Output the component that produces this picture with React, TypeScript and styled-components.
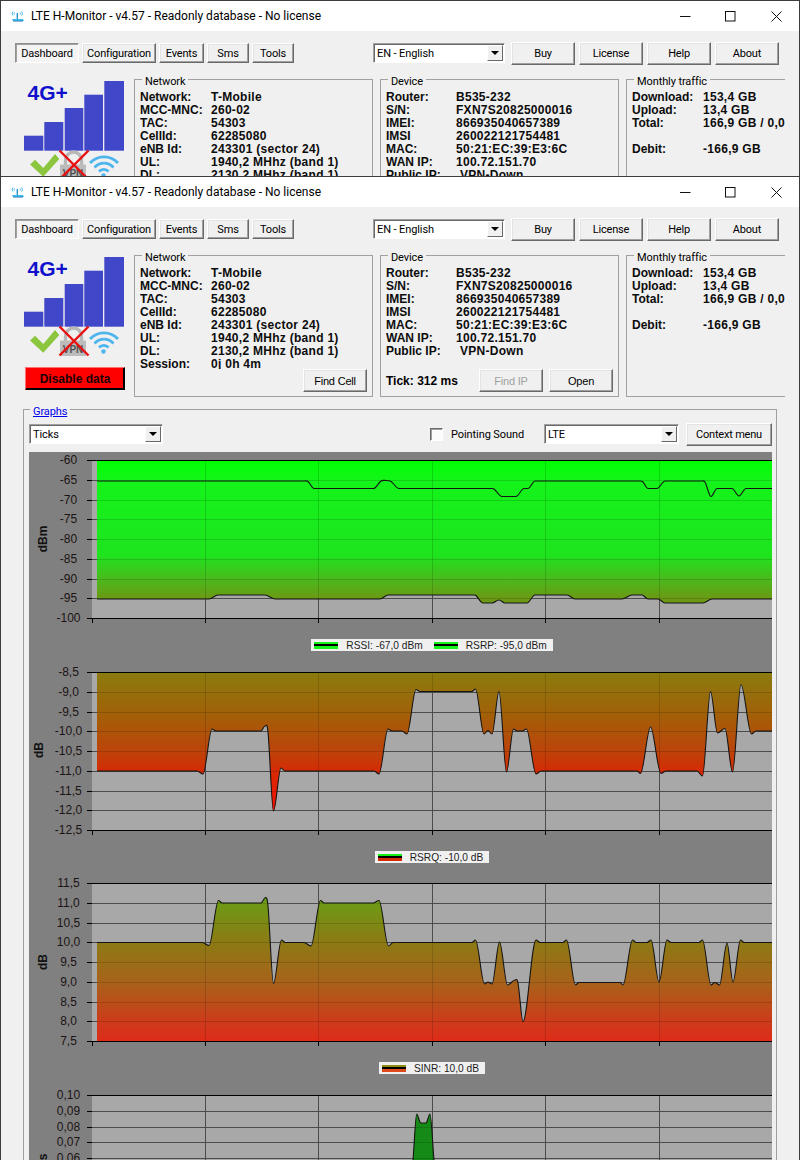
import React, { FC, ReactNode, useId } from "react";
import styled, { createGlobalStyle } from "styled-components";

const UI_FONT = `Roboto, "Liberation Sans", sans-serif`;
const DATA_FONT = `"Liberation Sans", Arial, sans-serif`;

const GlobalStyle = createGlobalStyle`
  html, body {
    margin: 0;
    padding: 0;
    width: 800px;
    height: 1160px;
    overflow: hidden;
    background: #f0f0f0;
  }
  * { box-sizing: border-box; }
`;

const Page = styled.div`
  display: flex;
  flex-direction: column;
  width: 800px;
  height: 1160px;
  overflow: hidden;
`;

const Window = styled.div<{ $height: number }>`
  flex: none;
  height: ${({ $height }) => $height}px;
  overflow: hidden;
  background: #f0f0f0;
  border: 1px solid #3c3c3c;
  border-bottom: none;
  font-family: ${UI_FONT};
  color: #000;
`;

const TitleBar = styled.div`
  display: flex;
  align-items: center;
  height: 30px;
  background: #fff;
  padding-left: 10px;
`;

const TitleText = styled.span`
  margin-left: 7px;
  font-size: 12px;
  white-space: nowrap;
  flex: 1;
`;

const TitleButton = styled.span`
  display: flex;
  align-items: center;
  justify-content: center;
  width: 45.5px;
  height: 30px;
`;

const Toolbar = styled.div`
  display: flex;
  align-items: flex-start;
  padding: 11px 0 14px 14px;
  height: 48px;
`;

const TabGroup = styled.div`
  display: flex;
  gap: 3px;
  margin-top: 1px;
`;

const Button = styled.div<{ $width: number; $height?: number; $disabled?: boolean }>`
  flex: none;
  display: flex;
  align-items: center;
  justify-content: center;
  width: ${({ $width }) => $width}px;
  height: ${({ $height }) => $height ?? 23}px;
  background: #f0f0f0;
  border: 1px solid;
  border-color: #fff #696969 #696969 #fff;
  box-shadow: inset -1px -1px 0 #a0a0a0, inset 1px 1px 0 #e3e3e3;
  font-size: 11px;
  letter-spacing: -0.2px;
  color: ${({ $disabled }) => ($disabled ? "#a0a0a0" : "#000")};
  white-space: nowrap;
`;

const PressedButton = styled(Button)`
  border-color: #8f8f8f #fff #fff #8f8f8f;
  box-shadow: inset 1px 1px 0 #a0a0a0;
  background: #f4f4f4;
`;

const Combo = styled.div<{ $width: number; $left?: number }>`
  flex: none;
  position: relative;
  display: flex;
  align-items: center;
  width: ${({ $width }) => $width}px;
  height: 20px;
  margin-left: ${({ $left }) => $left ?? 0}px;
  margin-top: 1px;
  background: #fff;
  padding-left: 3px;
  border: 1px solid;
  border-color: #a0a0a0 #fff #fff #a0a0a0;
  box-shadow: inset 1px 1px 0 #696969;
  font-size: 11px;
  letter-spacing: -0.1px;
  white-space: nowrap;
`;

const ComboArrow = styled.span`
  position: absolute;
  right: 1px;
  top: 1px;
  width: 16px;
  height: 16px;
  background: #f0f0f0;
  border: 1px solid;
  border-color: #fff #696969 #696969 #fff;
  &::after {
    content: "";
    position: absolute;
    left: 3px;
    top: 5px;
    border-style: solid;
    border-width: 4px 4px 0 4px;
    border-color: #000 transparent transparent transparent;
  }
`;

const RightButtons = styled.div`
  display: flex;
  gap: 4px;
  margin-left: 6px;
`;

const Sections = styled.div`
  display: flex;
  height: 142px;
`;

const LogoColumn = styled.div`
  flex: none;
  width: 133px;
  padding: 2px 0 0 23px;
`;

const DisableButton = styled.div`
  display: flex;
  align-items: center;
  justify-content: center;
  width: 100px;
  height: 23px;
  margin: 10px 0 0 1px;
  background: #ff0000;
  border: 1px solid;
  border-color: #ff7070 #000 #000 #ff7070;
  box-shadow: inset -1px -1px 0 #000;
  font-family: ${DATA_FONT};
  font-weight: bold;
  font-size: 12px;
  color: #1a0000;
`;

const GroupBox = styled.div<{ $width: number; $open?: boolean }>`
  flex: none;
  position: relative;
  display: flex;
  flex-direction: column;
  width: ${({ $width }) => $width}px;
  margin-right: 7px;
  padding: 11px 5px 4px;
  border: 1px solid #a0a0a0;
  ${({ $open }) => ($open ? "border-right: none; padding-right: 0;" : "")}
  font-family: ${DATA_FONT};
  font-size: 12px;
`;

const GroupTitle = styled.span`
  position: absolute;
  left: 7px;
  top: -5px;
  padding: 0 3px;
  background: #f0f0f0;
  font-family: ${UI_FONT};
  font-size: 11px;
  letter-spacing: -0.1px;
  line-height: 13px;
  white-space: nowrap;
`;

const GraphsTitle = styled(GroupTitle)`
  left: 6px;
  color: #0000ee;
  text-decoration: underline;
`;

const InfoList = styled.div`
  overflow: hidden;
`;

const InfoRow = styled.div<{ $labelWidth: number }>`
  display: grid;
  grid-template-columns: ${({ $labelWidth }) => $labelWidth}px 1fr;
  height: 13px;
  line-height: 13px;
  font-weight: bold;
  color: #0c0c0c;
  white-space: nowrap;
`;

const InfoValue = styled.span<{ $indent?: boolean }>`
  padding-left: ${({ $indent }) => ($indent ? 4 : 0)}px;
  letter-spacing: 0.28px;
`;

const BoxFooter = styled.div`
  display: flex;
  align-items: center;
  justify-content: flex-end;
  gap: 6px;
  margin-top: auto;
`;

const TickText = styled.span`
  margin-right: auto;
  font-weight: bold;
`;

const GraphsBox = styled.div`
  position: relative;
  width: 754px;
  height: 760px;
  margin: 12px 0 0 22px;
  padding: 13px 4px 0 5px;
  border: 1px solid #a0a0a0;
  border-bottom: none;
`;

const GraphsControls = styled.div`
  display: flex;
  align-items: flex-start;
  height: 29px;
`;

const SoundOption = styled.label`
  display: flex;
  align-items: center;
  gap: 8px;
  margin: 5px 20px 0 auto;
  font-size: 11px;
  letter-spacing: -0.1px;
  white-space: nowrap;
`;

const CheckBox = styled.span`
  width: 13px;
  height: 13px;
  background: #fbfbfb;
  border: 1px solid;
  border-color: #696969 #fff #fff #696969;
  box-shadow: inset 1px 1px 0 #a0a0a0;
`;

const ContextButton = styled(Button)`
  margin-left: 7px;
`;

const ChartPanel = styled.div`
  width: 743px;
  background: #808080;
`;

const ChartPane = styled.div<{ $height: number }>`
  height: ${({ $height }) => $height}px;
`;

const ChartSvg = styled.svg`
  display: block;
`;

const LegendRow = styled.div`
  display: flex;
  align-items: center;
  justify-content: center;
  height: 30px;
  padding-left: 63px;
`;

const LegendBox = styled.div`
  display: flex;
  align-items: center;
  gap: 11px;
  height: 12px;
  padding: 0 6px 0 3px;
  background: #f0f0f0;
  font-family: ${DATA_FONT};
  font-size: 10.2px;
  color: #1c1c1c;
  white-space: nowrap;
`;

const LegendEntry = styled.span`
  display: flex;
  align-items: center;
  gap: 8px;
`;

const LegendKey = styled.span<{ $fill: string }>`
  position: relative;
  width: 24px;
  height: 7px;
  background: ${({ $fill }) => $fill};
  &::after {
    content: "";
    position: absolute;
    left: 0;
    right: 0;
    top: 2.5px;
    height: 2px;
    background: #000;
  }
`;

type Point = [number, number];

const CHART_LEFT = 29;
const CHART_WIDTH = 743;
const PLOT_LEFT = 92;
const PLOT_RIGHT = 772;
const GRID_X = [205.5, 318.5, 432.5, 545.5, 659.5];

// hermite spline through the points, flat at each peak and dip so it stays on the read values
const splinePath = (points: Point[]) => {
  const slope = (i: number) => {
    const a = points[Math.max(i - 1, 0)];
    const p = points[i];
    const b = points[Math.min(i + 1, points.length - 1)];
    if ((p[1] - a[1]) * (b[1] - p[1]) <= 0) return 0;
    return (b[1] - a[1]) / (b[0] - a[0]);
  };
  let d = `M${points[0][0]} ${points[0][1]}`;
  for (let i = 0; i < points.length - 1; i++) {
    const [x0, y0] = points[i];
    const [x1, y1] = points[i + 1];
    const dx = (x1 - x0) / 3;
    d += ` C${x0 + dx} ${y0 + slope(i) * dx} ${x1 - dx} ${y1 - slope(i + 1) * dx} ${x1} ${y1}`;
  }
  return d;
};

type ChartConfig = {
  top: number;
  paneHeight: number;
  labels: string[];
  unit: string;
  unitX: number;
  unitY: number;
  series: Point[][];
  fillEdge: "top" | "bottom";
  fillPoints: Point[];
  stops: [number, string][];
};

const PLOT_HEIGHT = 158;

const Chart: FC<{ config: ChartConfig; children: ReactNode }> = ({ config, children }) => {
  const { top, paneHeight, labels, unit, unitX, unitY, series, fillEdge, fillPoints, stops } = config;
  const id = useId();
  const step = PLOT_HEIGHT / (labels.length - 1);
  const bottom = top + PLOT_HEIGHT;
  const rows = labels.map((_, i) => Math.round(top + i * step) + 0.5);
  const edge = fillEdge === "top" ? top : bottom;
  const first = fillPoints[0];
  const last = fillPoints[fillPoints.length - 1];
  const area = `${splinePath(fillPoints)} L${last[0]} ${edge} L${first[0]} ${edge} Z`;

  const grid = (
    <>
      {rows.slice(1, -1).map((y) => (
        <line key={y} x1={PLOT_LEFT} x2={PLOT_RIGHT} y1={y} y2={y} />
      ))}
      {GRID_X.map((x) => (
        <line key={x} x1={x} x2={x} y1={top} y2={bottom} />
      ))}
    </>
  );

  return (
    <ChartPane $height={paneHeight}>
      <ChartSvg
        width={CHART_WIDTH}
        height={178}
        viewBox={`${CHART_LEFT} ${top - 8} ${CHART_WIDTH} 178`}
      >
        <defs>
          <linearGradient id={`${id}g`} gradientUnits="userSpaceOnUse" x1="0" x2="0" y1={top} y2={bottom}>
            {stops.map(([offset, color]) => (
              <stop key={offset} offset={offset} stopColor={color} />
            ))}
          </linearGradient>
          <clipPath id={`${id}c`}>
            <path d={area} />
          </clipPath>
        </defs>
        <rect x={PLOT_LEFT} y={top} width={PLOT_RIGHT - PLOT_LEFT} height={PLOT_HEIGHT} fill="#a8a8a8" />
        <g stroke="#4c4c4c" strokeWidth="1" shapeRendering="crispEdges">
          {grid}
        </g>
        <path d={area} fill={`url(#${id}g)`} />
        <g stroke="#000" strokeOpacity="0.14" strokeWidth="1" shapeRendering="crispEdges" clipPath={`url(#${id}c)`}>
          {grid}
        </g>
        {series.map((points, i) => (
          <path key={i} d={splinePath(points)} fill="none" stroke="#141414" strokeWidth="1.1" />
        ))}
        <g stroke="#000" strokeWidth="1" shapeRendering="crispEdges">
          <line x1={PLOT_LEFT - 5} x2={PLOT_RIGHT} y1={rows[0]} y2={rows[0]} />
          <line x1={PLOT_LEFT - 5} x2={PLOT_RIGHT} y1={rows[rows.length - 1]} y2={rows[rows.length - 1]} />
          {rows.slice(1, -1).map((y) => (
            <line key={y} x1={PLOT_LEFT - 5} x2={PLOT_LEFT} y1={y} y2={y} />
          ))}
          {[PLOT_LEFT + 0.5, ...GRID_X].map((x) => (
            <line key={x} x1={x} x2={x} y1={bottom} y2={bottom + 5} />
          ))}
        </g>
        <g fontFamily={DATA_FONT} fontSize="12" fill="#1c1414" textAnchor="middle">
          {labels.map((label, i) => (
            <text key={label} x="68.5" y={rows[i] + 3}>
              {label}
            </text>
          ))}
          <text
            fontWeight="bold"
            fill="#111"
            transform={`translate(${unitX} ${unitY}) rotate(-90)`}
          >
            {unit}
          </text>
        </g>
      </ChartSvg>
      <LegendRow>{children}</LegendRow>
    </ChartPane>
  );
};

const rssi: Point[] = [
  [97, 481], [304, 481], [308, 481.5], [314, 488.5], [317, 488.5], [372, 488.5], [375, 488],
  [381, 481], [386, 480.5], [391, 481.5], [399, 488.5], [403, 488.5], [491, 488.5], [494, 489],
  [502, 496.5], [516, 496.5], [524, 488.5], [528, 488.5], [535, 481], [640, 481], [643, 482],
  [648, 488.5], [657, 488.5], [665, 481], [702, 481], [705, 482], [711, 496.5], [717, 488.5],
  [732, 488.5], [739, 496], [746, 488.5], [772, 488.5],
];

const rsrp: Point[] = [
  [97, 599], [207, 599], [209, 599], [218, 595], [265, 595], [275, 599], [378, 599], [380, 599],
  [388, 595], [474, 595], [476, 595.5], [483, 603], [492, 603], [499, 600], [505, 603], [527, 603],
  [535, 595], [567, 595], [575, 599], [622, 599], [632, 595], [642, 595], [648, 599], [658, 599],
  [665, 603], [703, 603], [712, 599], [772, 599],
];

const rsrq: Point[] = [
  [97, 771], [197, 771], [203, 774], [212, 729], [216, 731], [261, 731], [265, 726], [268, 732],
  [273.5, 811], [281, 768], [285, 771], [374, 771], [379, 774], [388, 729], [392, 731], [402, 731],
  [407, 734], [416, 689.5], [420, 691.5], [472, 691.5], [475.5, 689], [484, 734], [488, 730.5],
  [492, 734], [499, 691.5], [506.5, 772], [513.5, 729], [517, 731], [522, 731], [526.5, 729],
  [536, 774], [541, 771], [637, 771], [640.5, 773.5], [650.5, 727], [661, 773.5], [666, 771],
  [697, 771], [702.5, 776], [710.5, 691.5], [717.5, 733], [725, 728.5], [732.5, 772], [741, 684.5],
  [751.5, 734], [756, 731], [772, 731],
];

const sinr: Point[] = [
  [97, 942.5], [202, 942.5], [209, 945.5], [218.5, 900.5], [222, 903], [261, 903], [265.5, 897.5],
  [268, 906], [273.5, 983.5], [281.5, 940], [285, 942.5], [304, 942.5], [311, 946], [320.5, 900.5],
  [324, 903], [373, 903], [379, 900.5], [388.5, 946], [393, 942.5], [472, 942.5], [475.5, 940],
  [484.5, 984], [488, 982], [492, 984], [499.5, 942], [507.5, 985], [515, 980], [518, 983],
  [523, 1021.5], [536, 940], [540, 942.5], [563, 942.5], [566.5, 940], [575.5, 985], [579, 982.5],
  [620, 982.5], [623, 985], [632.5, 940], [636, 942.5], [647, 942.5], [651, 940], [659, 982],
  [667, 940], [671, 942.5], [699, 942.5], [702.5, 940], [711, 985], [715, 982.5], [719.5, 985],
  [727, 943], [733, 982], [740.5, 940], [744, 942.5], [772, 942.5],
];

const speed: Point[] = [
  [404, 1253], [409, 1200], [413, 1160], [416.7, 1114], [420.7, 1123], [426, 1123], [430, 1114],
  [434, 1160], [438, 1200], [443, 1253],
];

const charts: { config: ChartConfig; legend: { fill: string; text: string }[] }[] = [
  {
    config: {
      top: 460,
      paneHeight: 212,
      labels: ["-60", "-65", "-70", "-75", "-80", "-85", "-90", "-95", "-100"],
      unit: "dBm",
      unitX: 46.5,
      unitY: 539,
      series: [rssi, rsrp],
      fillEdge: "top",
      fillPoints: rsrp,
      stops: [
        [0, "#00ff00"],
        [0.13, "#14f41a"],
        [0.6, "#1ee41e"],
        [0.76, "#4cb81c"],
        [0.88, "#6c9814"],
      ],
    },
    legend: [
      { fill: "#14f41a", text: "RSSI: -67,0 dBm" },
      { fill: "#14f41a", text: "RSRP: -95,0 dBm" },
    ],
  },
  {
    config: {
      top: 672,
      paneHeight: 211,
      labels: ["-8,5", "-9,0", "-9,5", "-10,0", "-10,5", "-11,0", "-11,5", "-12,0", "-12,5"],
      unit: "dB",
      unitX: 43,
      unitY: 750,
      series: [rsrq],
      fillEdge: "top",
      fillPoints: rsrq,
      stops: [
        [0, "#8a7c0e"],
        [0.25, "#a06208"],
        [0.5, "#bc440a"],
        [0.62, "#d42c04"],
        [0.87, "#fa0e00"],
      ],
    },
    legend: [{ fill: "linear-gradient(#10f010 30%, #d42c04 60%)", text: "RSRQ: -10,0 dB" }],
  },
  {
    config: {
      top: 883,
      paneHeight: 212,
      labels: ["11,5", "11,0", "10,5", "10,0", "9,5", "9,0", "8,5", "8,0", "7,5"],
      unit: "dB",
      unitX: 47,
      unitY: 962,
      series: [sinr],
      fillEdge: "bottom",
      fillPoints: sinr,
      stops: [
        [0, "#5aa814"],
        [0.127, "#6e9a14"],
        [0.375, "#8c7a14"],
        [0.63, "#a8621a"],
        [0.87, "#cc3c1a"],
        [1, "#de2c1a"],
      ],
    },
    legend: [{ fill: "linear-gradient(#8c8c14 45%, #e04a1a 55%)", text: "SINR: 10,0 dB" }],
  },
  {
    config: {
      top: 1095,
      paneHeight: 212,
      labels: ["0,10", "0,09", "0,08", "0,07", "0,06", "0,05", "0,04", "0,03", "0,02", "0,01", "0,00"],
      unit: "Mbit/s",
      unitX: 47,
      unitY: 1171,
      series: [speed],
      fillEdge: "bottom",
      fillPoints: speed,
      stops: [
        [0, "#168a16"],
        [1, "#168a16"],
      ],
    },
    legend: [],
  },
];

const AppIcon = () => (
  <svg width="13" height="12" viewBox="0 0 13 12" fill="none">
    <path d="M2 1.5a3 3 0 0 0 0 4M3.6 2.5a1.6 1.6 0 0 0 0 2M9 2.5a1.6 1.6 0 0 1 0 2M10.6 1.5a3 3 0 0 1 0 4" stroke="#3db4e6" strokeWidth="1" />
    <path d="M6.3 3v6" stroke="#2b93cf" strokeWidth="1.4" />
    <path d="M1 9h11l1 2H2z" fill="#45c0ee" />
    <path d="M2 11h10" stroke="#1c7fc0" strokeWidth="1" />
  </svg>
);

const MinimizeIcon = () => (
  <svg width="11" height="11" viewBox="0 0 11 11">
    <path d="M0 5.5h10.5" stroke="#111" strokeWidth="1" />
  </svg>
);

const MaximizeIcon = () => (
  <svg width="11" height="11" viewBox="0 0 11 11">
    <rect x="0.5" y="0.5" width="9.5" height="9.5" fill="none" stroke="#111" />
  </svg>
);

const CloseIcon = () => (
  <svg width="11" height="11" viewBox="0 0 11 11">
    <path d="M0.5 0.5l10 10M10.5 0.5l-10 10" stroke="#111" strokeWidth="1" />
  </svg>
);

const bars: [number, number, number][] = [
  [24, 19.3, 311.7],
  [44.3, 19, 298],
  [64.7, 18.6, 284],
  [84.3, 18.7, 270.7],
  [104.3, 19.7, 257],
];

// page coordinates of the lower window, so the numbers read against the screenshot
const SignalLogo = () => (
  <svg width="102" height="100" viewBox="24 257 102 100" style={{ display: "block" }}>
    {bars.map(([x, w, y]) => (
      <rect key={x} x={x} y={y} width={w} height={326.7 - y} fill="#4047c8" />
    ))}
    <text x="27.5" y="275.5" fontFamily={DATA_FONT} fontWeight="bold" fontSize="21" fill="#1010cc">
      4G+
    </text>
    <path d="M30 340.5L35 335.7L43.3 344L55 330L59.3 335L43.3 352.7Z" fill="#8cc63f" />
    <path d="M65.500 341v-5a8 8 0 0 1 16 0v5" fill="none" stroke="#b8b8b8" strokeWidth="3.4" />
    <rect x="60" y="340.5" width="26" height="15.5" rx="1" fill="#bcbcbc" />
    <text x="73" y="353" textAnchor="middle" fontFamily={DATA_FONT} fontSize="10" fontWeight="bold" fill="#505050">
      VPN
    </text>
    <path d="M59.5 326.5L88.5 355.5M88.5 326.5L59.5 355.5" stroke="#e81010" strokeWidth="2.4" />
    <g fill="none" stroke="#4db4ee" strokeWidth="2.8">
      <path d="M90 339a19 19 0 0 1 28 0" />
      <path d="M94.5 343.5a12.5 12.5 0 0 1 19 0" />
      <path d="M99 347.5a6.5 6.5 0 0 1 9.500 0" />
    </g>
    <circle cx="103.5" cy="351.5" r="2.2" fill="#4db4ee" />
  </svg>
);

type Info = [string, string, boolean?];

const networkRows: Info[] = [
  ["Network:", "T-Mobile"],
  ["MCC-MNC:", "260-02"],
  ["TAC:", "54303"],
  ["CellId:", "62285080"],
  ["eNB Id:", "243301 (sector 24)"],
  ["UL:", "1940,2 MHhz (band 1)"],
  ["DL:", "2130,2 MHhz (band 1)"],
  ["Session:", "0j 0h 4m"],
];

const deviceRows: Info[] = [
  ["Router:", "B535-232"],
  ["S/N:", "FXN7S20825000016"],
  ["IMEI:", "866935040657389"],
  ["IMSI", "260022121754481"],
  ["MAC:", "50:21:EC:39:E3:6C"],
  ["WAN IP:", "100.72.151.70"],
  ["Public IP:", "VPN-Down", true],
];

const trafficRows: Info[] = [
  ["Download:", "153,4 GB"],
  ["Upload:", "13,4 GB"],
  ["Total:", "166,9 GB / 0,0 GB"],
  ["", ""],
  ["Debit:", "-166,9 GB"],
];

const InfoTable: FC<{ rows: Info[]; labelWidth: number }> = ({ rows, labelWidth }) => (
  <InfoList>
    {rows.map(([label, value, indent], index) => (
      <InfoRow key={index} $labelWidth={labelWidth}>
        <span>{label}</span>
        <InfoValue $indent={indent}>{value}</InfoValue>
      </InfoRow>
    ))}
  </InfoList>
);

const MonitorWindow: FC<{ height: number; withGraphs?: boolean }> = ({ height, withGraphs }) => (
  <Window $height={height}>
    <TitleBar>
      <AppIcon />
      <TitleText>LTE H-Monitor - v4.57 - Readonly database - No license</TitleText>
      <TitleButton>
        <MinimizeIcon />
      </TitleButton>
      <TitleButton>
        <MaximizeIcon />
      </TitleButton>
      <TitleButton>
        <CloseIcon />
      </TitleButton>
    </TitleBar>
    <Toolbar>
      <TabGroup>
        <PressedButton $width={64} $height={20}>Dashboard</PressedButton>
        <Button $width={74} $height={20}>Configuration</Button>
        <Button $width={45} $height={20}>Events</Button>
        <Button $width={42} $height={20}>Sms</Button>
        <Button $width={42} $height={20}>Tools</Button>
      </TabGroup>
      <Combo $width={132} $left={79}>
        EN - English
        <ComboArrow />
      </Combo>
      <RightButtons>
        <Button $width={64}>Buy</Button>
        <Button $width={64}>License</Button>
        <Button $width={64}>Help</Button>
        <Button $width={64}>About</Button>
      </RightButtons>
    </Toolbar>
    <Sections>
      <LogoColumn>
        <SignalLogo />
        <DisableButton>Disable data</DisableButton>
      </LogoColumn>
      <GroupBox $width={239}>
        <GroupTitle>Network</GroupTitle>
        <InfoTable rows={networkRows} labelWidth={71} />
        <BoxFooter>
          <Button $width={64}>Find Cell</Button>
        </BoxFooter>
      </GroupBox>
      <GroupBox $width={239}>
        <GroupTitle>Device</GroupTitle>
        <InfoTable rows={deviceRows} labelWidth={70} />
        <BoxFooter>
          <TickText>Tick: 312 ms</TickText>
          <Button $width={64} $disabled>Find IP</Button>
          <Button $width={64}>Open</Button>
        </BoxFooter>
      </GroupBox>
      <GroupBox $width={159} $open>
        <GroupTitle>Monthly traffic</GroupTitle>
        <InfoTable rows={trafficRows} labelWidth={71} />
      </GroupBox>
    </Sections>
    {withGraphs && (
      <GraphsBox>
        <GraphsTitle>Graphs</GraphsTitle>
        <GraphsControls>
          <Combo $width={134}>
            Ticks
            <ComboArrow />
          </Combo>
          <SoundOption>
            <CheckBox />
            Pointing Sound
          </SoundOption>
          <Combo $width={135}>
            LTE
            <ComboArrow />
          </Combo>
          <ContextButton $width={86}>Context menu</ContextButton>
        </GraphsControls>
        <ChartPanel>
          {charts.map(({ config, legend }) => (
            <Chart key={config.top} config={config}>
              {legend.length > 0 && (
                <LegendBox>
                  {legend.map(({ fill, text }) => (
                    <LegendEntry key={text}>
                      <LegendKey $fill={fill} />
                      {text}
                    </LegendEntry>
                  ))}
                </LegendBox>
              )}
            </Chart>
          ))}
        </ChartPanel>
      </GraphsBox>
    )}
  </Window>
);

const App: FC = () => (
  <Page>
    <GlobalStyle />
    <MonitorWindow height={176} />
    <MonitorWindow height={984} withGraphs />
  </Page>
);

export default App;
